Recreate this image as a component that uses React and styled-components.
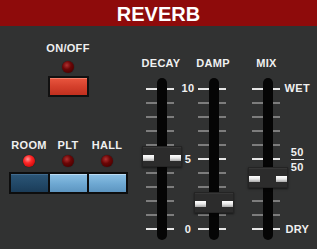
import React from "react";
import styled, { createGlobalStyle, css } from "styled-components";

const GlobalStyle = createGlobalStyle`
  * {
    margin: 0;
    padding: 0;
    box-sizing: border-box;
  }
  body {
    background: #313232;
    font-family: "Liberation Sans", Arial, sans-serif;
  }
`;

const TICK_TOP = 10.5;
const TICK_STEP = 14.1;
const tickY = (v) => TICK_TOP + (10 - v) * TICK_STEP;

const faders = [
  { name: "DECAY", value: 5.1, scale: ["10", "5", "0"] },
  { name: "DAMP", value: 1.79 },
  { name: "MIX", value: 3.56, scale: ["WET", "50/50", "DRY"] },
];

const modes = [
  { name: "ROOM", on: true },
  { name: "PLT", on: false },
  { name: "HALL", on: false },
];

function Reverb() {
  return (
    <Panel>
      <Header>REVERB</Header>
      <Body>
        <Switches>
          <Label>ON/OFF</Label>
          <Led $mt={7} />
          <PowerButton />
          <ModeLabels>
            {modes.map((m) => (
              <ModeCell key={m.name}>
                <Label>{m.name}</Label>
                <Led $on={m.on} $mt={4.4} />
              </ModeCell>
            ))}
          </ModeLabels>
          <ButtonStrip>
            {modes.map((m) => (
              <ModeButton key={m.name} $active={m.on} />
            ))}
          </ButtonStrip>
        </Switches>

        <Faders>
          <Fader {...faders[0]} />
          <Scale labels={faders[0].scale} width={12} />
          <Fader {...faders[1]} />
          <Gap />
          <Fader {...faders[2]} />
          <Scale labels={faders[2].scale} width={19.5} />
        </Faders>
      </Body>
    </Panel>
  );
}

function Fader({ name, value }) {
  return (
    <FaderCol>
      <FaderLabel>{name}</FaderLabel>
      <TrackArea>
        <Ticks>
          {[...Array(11)].map((_, i) => (
            <Tick key={i} $major={i % 5 === 0} />
          ))}
        </Ticks>
        <Track />
        <Knob style={{ top: tickY(value) - 12 }}>
          <Stripe />
          <Stripe />
        </Knob>
      </TrackArea>
    </FaderCol>
  );
}

function Scale({ labels, width }) {
  return (
    <ScaleCol $w={width}>
      {labels.map((l) => (
        <ScaleMark key={l}>
          {l === "50/50" ? (
            <Fraction>
              <Numer>50</Numer>
              <span>50</span>
            </Fraction>
          ) : (
            l
          )}
        </ScaleMark>
      ))}
    </ScaleCol>
  );
}

const Panel = styled.div`
  width: 317px;
  height: 249px;
  background: #313232;
  overflow: hidden;
`;

const Header = styled.div`
  height: 26px;
  padding-top: 2px;
  background: #8e0b0b;
  color: #fff;
  font-size: 20px;
  font-weight: bold;
  line-height: 24px;
  text-align: center;
`;

const Body = styled.div`
  display: flex;
  align-items: flex-start;
`;

const Label = styled.div`
  color: #f0f0f0;
  font-size: 11px;
  font-weight: bold;
  line-height: 11px;
  letter-spacing: 0.3px;
  white-space: nowrap;
`;

const Switches = styled.div`
  width: 136px;
  padding-top: 16.5px;
  display: flex;
  flex-direction: column;
  align-items: center;
`;

const Led = styled.div`
  width: 12px;
  height: 12px;
  margin-top: ${(p) => p.$mt}px;
  border-radius: 50%;
  box-shadow: 0 0 1px rgba(0, 0, 0, 0.8);
  ${(p) =>
    p.$on
      ? css`
          background: radial-gradient(circle at 40% 35%, #ff9a9a 0%, #ff2a2a 35%, #d40a0a 75%, #8a0000 100%);
        `
      : css`
          background: radial-gradient(circle at 40% 35%, #b03030 0%, #6a0606 40%, #4a0000 80%, #2a0000 100%);
        `}
`;

const PowerButton = styled.div`
  width: 41px;
  height: 21px;
  margin-top: 3.5px;
  border: 2px solid #111;
  background: linear-gradient(#e9563f, #d5402c 50%, #c2301f);
  box-shadow: inset 0 1px 0 rgba(255, 170, 150, 0.5);
`;

const ModeLabels = styled.div`
  display: grid;
  grid-template-columns: repeat(3, 37px);
  column-gap: 2px;
  padding: 0 2px;
  margin-top: 43px;
`;

const ModeCell = styled.div`
  display: flex;
  flex-direction: column;
  align-items: center;
`;

const ButtonStrip = styled.div`
  display: flex;
  gap: 2px;
  padding: 2px;
  margin-top: 4.5px;
  background: #0d0d0d;
`;

const ModeButton = styled.div`
  width: 37px;
  height: 18px;
  ${(p) =>
    p.$active
      ? css`
          background: linear-gradient(#2c5677, #214766 60%, #1b3c58);
          box-shadow: inset 0 1px 0 rgba(120, 160, 200, 0.3);
        `
      : css`
          background: linear-gradient(#8cc0e4, #6ea8d2 55%, #5d95c0);
          box-shadow: inset 0 1px 0 rgba(220, 240, 255, 0.6);
        `}
`;

const Faders = styled.div`
  display: flex;
  align-items: flex-start;
  margin-left: 6px;
  padding-top: 32px;
`;

const Gap = styled.div`
  width: 13.5px;
`;

const FaderCol = styled.div`
  width: 40px;
  display: flex;
  flex-direction: column;
  align-items: center;
`;

const FaderLabel = styled(Label)`
  padding-right: 2px;
`;

const TrackArea = styled.div`
  position: relative;
  width: 40px;
  height: 162px;
  margin-top: 9px;
`;

const Ticks = styled.div`
  height: 100%;
  padding: 9.5px 8px 9.5px 4px;
  display: flex;
  flex-direction: column;
  justify-content: space-between;
`;

const Tick = styled.div`
  height: 2px;
  background: ${(p) => (p.$major ? "#e6e6e6" : "#7d7d7d")};
`;

const Track = styled.div`
  position: absolute;
  top: 0;
  bottom: 0;
  left: 15px;
  width: 10px;
  border-radius: 5px;
  background: #050505;
`;

const Knob = styled.div`
  position: absolute;
  left: 0;
  width: 40px;
  height: 21px;
  display: flex;
  justify-content: space-between;
  align-items: center;
  padding: 3px 0 0;
  background: #2c2c2c;
  border: 1px solid #242424;
  box-shadow: 0 1px 2px rgba(0, 0, 0, 0.55), inset 0 1px 0 rgba(255, 255, 255, 0.05);
`;

const Stripe = styled.div`
  width: 11px;
  height: 6px;
  background: linear-gradient(#ffffff, #e8e8e8 50%, #a8a8a8);
`;

const ScaleCol = styled.div`
  width: ${(p) => p.$w}px;
  height: 162px;
  margin-top: 20px;
  padding: 9.5px 0;
  display: flex;
  flex-direction: column;
  justify-content: space-between;
`;

const ScaleMark = styled.div`
  height: 2px;
  display: flex;
  align-items: center;
  justify-content: center;
  color: #f0f0f0;
  font-size: 11px;
  font-weight: bold;
  letter-spacing: 0.3px;
  line-height: 11px;
  white-space: nowrap;
`;

const Fraction = styled.div`
  display: flex;
  flex-direction: column;
  align-items: center;
  line-height: 10px;
`;

const Numer = styled.span`
  padding-bottom: 2px;
  margin-bottom: 2px;
  border-bottom: 1px solid #f0f0f0;
`;

export default function App() {
  return (
    <>
      <GlobalStyle />
      <Reverb />
    </>
  );
}
